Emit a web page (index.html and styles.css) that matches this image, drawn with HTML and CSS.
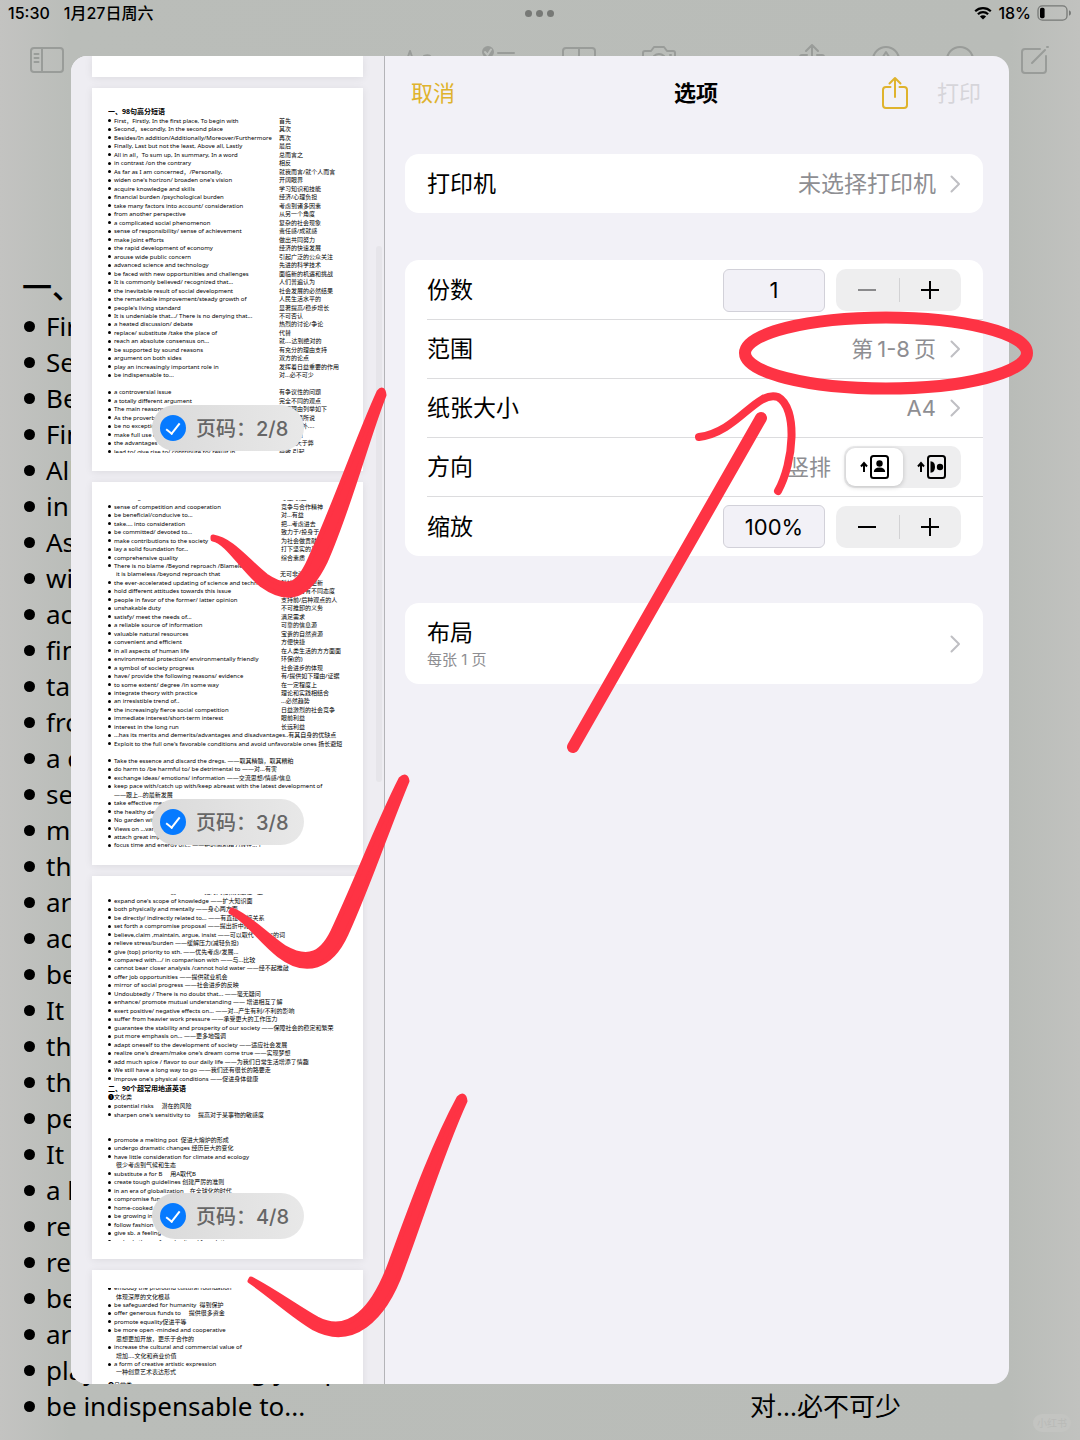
FILE: index.html
```html
<!DOCTYPE html>
<html lang="zh-CN">
<head>
    <meta charset="UTF-8">
    <meta name="viewport" content="width=device-width, initial-scale=1.0">
    <title>打印选项</title>
    <link rel="stylesheet" href="styles.css">
</head>
<body>

<!-- Status bar -->
<div class="statusbar">
    <div class="status-left"><span>15:30</span><span>1月27日周六</span></div>
    <div class="dots"><i></i><i></i><i></i></div>
    <div class="status-right">
        <svg width="18" height="14" viewBox="0 0 18 14"><path d="M1.2 5.2a11.2 11.2 0 0 1 15.6 0M3.9 8.2a7.3 7.3 0 0 1 10.2 0" fill="none" stroke="#000" stroke-width="2.2"/><path d="M9 13.6 5.9 10.5a4.4 4.4 0 0 1 6.2 0z"/></svg>
        <span>18%</span>
        <svg width="34" height="16" viewBox="0 0 34 16"><rect x="1" y=".8" width="29" height="14.4" rx="4.4" fill="none" stroke="#767876" stroke-width="1.3"/><rect x="3" y="2.8" width="4.6" height="10.4" rx="1.6"/><path d="M32 5.3v5.4q2-.6 2-2.7t-2-2.7z" fill="#767876"/></svg>
    </div>
</div>

<!-- Notes toolbar -->
<div class="toolbar">
    <svg width="34" height="28" viewBox="0 0 34 28"><rect x="1" y="2" width="32" height="24" rx="3"/><path d="M12 2v24M4.500 8h4M4.500 12h4M4.500 16h4"/></svg>
    <div class="tools-mid">
        <svg width="34" height="28" viewBox="0 0 34 28"><path d="M1 25 8 5l7 20M4 18h8M22 10q5-2 7 1v14"/></svg>
        <svg width="34" height="28" viewBox="0 0 34 28"><circle cx="6" cy="6" r="6" fill="#999c99" stroke="none"/><path d="m3 6 2.500 3L9 3.500" stroke="#bbbeba"/><path d="M16 7h16M16 21h16"/><circle cx="6" cy="21" r="5"/></svg>
        <svg width="34" height="28" viewBox="0 0 34 28"><rect x="1" y="2" width="32" height="24" rx="3"/><path d="M17 2v24M1 14h32"/></svg>
        <svg width="34" height="28" viewBox="0 0 34 28"><path d="M1 24V7q0-2 2-2h6l3-4h10l3 4h6q2 0 2 2v17z"/><circle cx="17" cy="15" r="7"/><path d="M28 9h1"/></svg>
    </div>
    <div class="tools-right">
        <svg width="34" height="28" viewBox="0 0 34 28"><path d="M12 9H7q-2 0-2 2v15h24V11q0-2-2-2h-5M17 19V-1M11 5l6-6 6 6"/></svg>
        <svg width="34" height="28" viewBox="0 0 34 28"><circle cx="17" cy="14" r="13"/><path d="m12 14 5-8 5 8-3 8h-4z"/></svg>
        <svg width="34" height="28" viewBox="0 0 34 28"><circle cx="17" cy="14" r="13"/><path d="M10 14h1M17 14h1M24 14h1"/></svg>
        <svg width="34" height="28" viewBox="0 0 34 28"><path d="M23 3H8Q5 3 5 6v18q0 3 3 3h18q3 0 3-3V10M15 17 28 4M30 1h1"/></svg>
    </div>
</div>

<!-- The note behind the sheet -->
<div class="note">
    <h1>一、98句高分短语</h1>
    <ul>
        <li>First, Firstly, In the first place, To begin with</li>
        <li>Second, secondly, In the second place</li>
        <li>Besides/In addition/Additionally</li>
        <li>Finally, Last but not the least, Above all, Lastly</li>
        <li>All in all, To sum up, In summary, In a word</li>
        <li>in contrast /on the contrary</li>
        <li>As far as I am concerned, /Personally,</li>
        <li>widen one's horizon/ broaden one's vision</li>
        <li>acquire knowledge and skills</li>
        <li>financial burden /psychological burden</li>
        <li>take many factors into account/ consideration</li>
        <li>from another perspective</li>
        <li>a complicated social phenomenon</li>
        <li>sense of responsibility/ sense of achievement</li>
        <li>make joint efforts</li>
        <li>the rapid development of economy</li>
        <li>arouse wide public concern</li>
        <li>advanced science and technology</li>
        <li>be faced with new opportunities and challenges</li>
        <li>It is commonly believed/ recognized that...</li>
        <li>the inevitable result of social development</li>
        <li>the remarkable improvement/steady growth of</li>
        <li>people's living standard</li>
        <li>It is undeniable that.../ There is no denying that...</li>
        <li>a heated discussion/ debate</li>
        <li>replace/ substitute /take the place of</li>
        <li>reach an absolute consensus on...</li>
        <li>be supported by sound reasons</li>
        <li>argument on both sides</li>
        <li>play an increasingly important role in</li>
        <li>be indispensable to...<span>对...必不可少</span></li>
    </ul>
</div>

<!-- Print sheet -->
<div class="sheet">
    <div class="preview">
        <div class="page page-end"></div>

        <div class="page">
            <div class="page-body">
                <ul class="phrases first">
                    <li class="title">一、98句高分短语</li>
                    <li>First，Firstly, In the first place, To begin with<span>首先</span></li>
                    <li>Second，secondly, In the second place<span>其次</span></li>
                    <li>Besides/In addition/Additionally/Moreover/Furthermore<span>再次</span></li>
                    <li>Finally, Last but not the least, Above all, Lastly<span>最后</span></li>
                    <li>All in all，To sum up, In summary, In a word<span>总而言之</span></li>
                    <li>in contrast /on the contrary<span>相反</span></li>
                    <li>As far as I am concerned，/Personally,<span>就我而言/就个人而言</span></li>
                    <li>widen one's horizon/ broaden one's vision<span>开阔眼界</span></li>
                    <li>acquire knowledge and skills<span>学习知识和技能</span></li>
                    <li>financial burden /psychological burden<span>经济/心理负担</span></li>
                    <li>take many factors into account/ consideration<span>考虑到诸多因素</span></li>
                    <li>from another perspective<span>从另一个角度</span></li>
                    <li>a complicated social phenomenon<span>复杂的社会现象</span></li>
                    <li>sense of responsibility/ sense of achievement<span>责任感/成就感</span></li>
                    <li>make joint efforts<span>做出共同努力</span></li>
                    <li>the rapid development of economy<span>经济的快速发展</span></li>
                    <li>arouse wide public concern<span>引起广泛的公众关注</span></li>
                    <li>advanced science and technology<span>先进的科学技术</span></li>
                    <li>be faced with new opportunities and challenges<span>面临新的机遇和挑战</span></li>
                    <li>It is commonly believed/ recognized that...<span>人们普遍认为</span></li>
                    <li>the inevitable result of social development<span>社会发展的必然结果</span></li>
                    <li>the remarkable improvement/steady growth of<span>人民生活水平的</span></li>
                    <li>people's living standard<span>显著提高/稳步增长</span></li>
                    <li>It is undeniable that.../ There is no denying that...<span>不可否认</span></li>
                    <li>a heated discussion/ debate<span>热烈的讨论/争论</span></li>
                    <li>replace/ substitute /take the place of<span>代替</span></li>
                    <li>reach an absolute consensus on...<span>就....达到绝对的</span></li>
                    <li>be supported by sound reasons<span>有充分的理由支持</span></li>
                    <li>argument on both sides<span>双方的论点</span></li>
                    <li>play an increasingly important role in<span>发挥着日益重要的作用</span></li>
                    <li>be indispensable to...<span>对...必不可少</span></li>
                    <li class="blank"></li>
                    <li>a controversial issue<span>有争议性的问题</span></li>
                    <li>a totally different argument<span>完全不同的观点</span></li>
                    <li>The main reasons are<span>主要理由列举如下</span></li>
                    <li>As the proverb goes<span>正如谚语所说</span></li>
                    <li>be no exception<span>...也不例外....</span></li>
                    <li>make full use of<span>充分利用</span></li>
                    <li>the advantages outweigh<span>...的利大于弊</span></li>
                    <li>lead to/ give rise to/ contribute to/ result in<span>导致,引起</span></li>
                </ul>
            </div>
            <label class="pagetag"><input type="checkbox" checked><span>页码：2/8</span></label>
        </div>

        <div class="page">
            <div class="page-body">
                <ul class="phrases second">
                    <li>lead to/ give rise to/ contribute to/ result in<span>导致,引起</span></li>
                    <li>sense of competition and cooperation<span>竞争与合作精神</span></li>
                    <li>be beneficial/conducive to...<span>对...有益</span></li>
                    <li>take.... into consideration<span>把...考虑进去</span></li>
                    <li>be committed/ devoted to...<span>致力于/投身于</span></li>
                    <li>make contributions to the society<span>为社会做贡献</span></li>
                    <li>lay a solid foundation for...<span>打下坚实的基础</span></li>
                    <li>comprehensive quality<span>综合素质</span></li>
                    <li>There is no blame /Beyond reproach /Blameless /</li>
                    <li class="cont">it is blameless /beyond reproach that<span>无可非议</span></li>
                    <li>the ever-accelerated updating of science and technology<span>科技的不断更新</span></li>
                    <li>hold different attitudes towards this issue<span>对此事持有不同态度</span></li>
                    <li>people in favor of the former/ latter opinion<span>支持前/后种观点的人</span></li>
                    <li>unshakable duty<span>不可推卸的义务</span></li>
                    <li>satisfy/ meet the needs of...<span>满足需求</span></li>
                    <li>a reliable source of information<span>可靠的信息源</span></li>
                    <li>valuable natural resources<span>宝贵的自然资源</span></li>
                    <li>convenient and efficient<span>方便快捷</span></li>
                    <li>in all aspects of human life<span>在人类生活的方方面面</span></li>
                    <li>environmental protection/ environmentally friendly<span>环保(的)</span></li>
                    <li>a symbol of society progress<span>社会进步的体现</span></li>
                    <li>have/ provide the following reasons/ evidence<span>有/提供如下理由/证据</span></li>
                    <li>to some extent/ degree /in some way<span>在一定程度上</span></li>
                    <li>integrate theory with practice<span>理论和实践相结合</span></li>
                    <li>an irresistible trend of..<span>...必然趋势</span></li>
                    <li>the increasingly fierce social competition<span>日益激烈的社会竞争</span></li>
                    <li>immediate interest/short-term interest<span>眼前利益</span></li>
                    <li>interest in the long run<span>长远利益</span></li>
                    <li>...has its merits and demerits/advantages and disadvantages..有其自身的优缺点</li>
                    <li>Exploit to the full one's favorable conditions and avoid unfavorable ones 扬长避短</li>
                    <li class="blank"></li>
                    <li>Take the essence and discard the dregs. ——取其精髓，取其糟粕</li>
                    <li>do harm to /be harmful to/ be detrimental to ——对...有害</li>
                    <li>exchange ideas/ emotions/ information ——交流思想/情感/信息</li>
                    <li>keep pace with/catch up with/keep abreast with the latest development of</li>
                    <li class="wrapped">——跟上...的最新发展</li>
                    <li>take effective measures</li>
                    <li>the healthy development</li>
                    <li>No garden without weeds</li>
                    <li>Views on ...vary</li>
                    <li>attach great importance</li>
                    <li>focus time and energy on... ——把时间和精力放在...上</li>
                </ul>
            </div>
            <label class="pagetag"><input type="checkbox" checked><span>页码：3/8</span></label>
        </div>

        <div class="page">
            <div class="page-body">
                <ul class="phrases third">
                    <li>focus time and energy on... ——把时间和精力放在...上</li>
                    <li>expand one's scope of knowledge ——扩大知识面</li>
                    <li>both physically and mentally ——身心两方面</li>
                    <li>be directly/ indirectly related to... ——有直接/间接关系</li>
                    <li>set forth a compromise proposal ——提出折中建议</li>
                    <li>believe,claim ,maintain, argue, insist ——可以取代"think"的词</li>
                    <li>relieve stress/burden ——缓解压力(减轻负担)</li>
                    <li>give (top) priority to sth. ——优先考虑/发展...</li>
                    <li>compared with.../ in comparison with ——与...比较</li>
                    <li>cannot bear closer analysis /cannot hold water ——经不起推敲</li>
                    <li>offer job opportunities ——提供就业机会</li>
                    <li>mirror of social progress ——社会进步的反映</li>
                    <li>Undoubtedly / There is no doubt that... ——毫无疑问</li>
                    <li>enhance/ promote mutual understanding —— 增进相互了解</li>
                    <li>exert positive/ negative effects on... ——对...产生有利/不利的影响</li>
                    <li>suffer from heavier work pressure ——承受更大的工作压力</li>
                    <li>guarantee the stability and prosperity of our society ——保障社会的稳定和繁荣</li>
                    <li>put more emphasis on... ——更多地强调</li>
                    <li>adapt oneself to the development of society ——适应社会发展</li>
                    <li>realize one's dream/make one's dream come true ——实现梦想</li>
                    <li>add much spice / flavor to our daily life ——为我们日常生活增添了情趣</li>
                    <li>We still have a long way to go ——我们还有很长的路要走</li>
                    <li>improve one's physical conditions ——促进身体健康</li>
                    <li class="title">二、90个超常用地道英语</li>
                    <li class="plain">❶文化类</li>
                    <li>potential risks &nbsp; &nbsp; 潜在的风险</li>
                    <li>sharpen one's sensitivity to &nbsp; &nbsp; 提高对于某事物的敏感度</li>
                    <li class="blank"></li>
                    <li class="blank"></li>
                    <li>promote a melting pot &nbsp;促进大熔炉的形成</li>
                    <li>undergo dramatic changes 经历巨大的变化</li>
                    <li>have little consideration for climate and ecology</li>
                    <li class="cont">很少考虑到气候和生态</li>
                    <li>substitute a for B &nbsp; &nbsp; 用A取代B</li>
                    <li>create tough guidelines 创建严厉的准则</li>
                    <li>in an era of globalization &nbsp; &nbsp;在全球化的时代</li>
                    <li>compromise fundamentals</li>
                    <li>home-cooked meal</li>
                    <li>be growing in number</li>
                    <li>follow fashion blindly</li>
                    <li>give sb. a feeling of</li>
                    <li>embody the profound cultural foundation</li>
                </ul>
            </div>
            <label class="pagetag"><input type="checkbox" checked><span>页码：4/8</span></label>
        </div>

        <div class="page">
            <div class="page-body">
                <ul class="phrases fourth">
                    <li>embody the profound cultural foundation</li>
                    <li class="cont">体现深厚的文化根基</li>
                    <li>be safeguarded for humanity &nbsp;得到保护</li>
                    <li>offer generous funds to &nbsp; &nbsp; 提供很多资金</li>
                    <li>promote equality促进平等</li>
                    <li>be more open -minded and cooperative</li>
                    <li class="cont">思想更加开放，更乐于合作的</li>
                    <li>increase the cultural and commercial value of</li>
                    <li class="cont">增加....文化和商业价值</li>
                    <li>a form of creative artistic expression</li>
                    <li class="cont">一种创意艺术表达形式</li>
                    <li class="plain last">❷日常类</li>
                </ul>
            </div>
        </div>
        <div class="scroller"></div>
    </div>

    <div class="options">
        <div class="options-head">
            <button class="cancel">取消</button>
            <h2>选项</h2>
            <div class="head-actions">
                <button class="share" aria-label="分享"><svg width="28" height="34" viewBox="0 0 28 34"><path d="M9.500 11H5q-3 0-3 3v15q0 3 3 3h18q3 0 3-3V14q0-3-3-3h-4.500M14 21V2M8.500 7.500 14 2l5.500 5.500"/></svg></button>
                <button class="print" disabled>打印</button>
            </div>
        </div>

        <div class="card">
            <div class="row"><span>打印机</span><a href="#" class="value"><span>未选择打印机</span><svg width="11" height="18" viewBox="0 0 11 18"><path d="m1.500 1.500 7.500 7.500-7.500 7.500"/></svg></a></div>
        </div>

        <div class="card settings">
            <div class="row">
                <label for="copies">份数</label>
                <div class="controls">
                    <input class="field" id="copies" type="text" value="1">
                    <div class="stepper"><button class="off" aria-label="减少份数"><svg width="20" height="20" viewBox="0 0 20 20"><path d="M1 10h18"/></svg></button><button aria-label="增加份数"><svg width="20" height="20" viewBox="0 0 20 20"><path d="M1 10h18M10 1v18"/></svg></button></div>
                </div>
            </div>
            <div class="row"><span>范围</span><a href="#" class="value"><span class="range"><span>第</span><span>1-8</span><span>页</span></span><svg width="11" height="18" viewBox="0 0 11 18"><path d="m1.500 1.500 7.500 7.500-7.500 7.500"/></svg></a></div>
            <div class="row"><span>纸张大小</span><a href="#" class="value"><span class="latin">A4</span><svg width="11" height="18" viewBox="0 0 11 18"><path d="m1.500 1.500 7.500 7.500-7.500 7.500"/></svg></a></div>
            <div class="row">
                <span>方向</span>
                <div class="controls">
                    <span class="orient">竖排</span>
                    <div class="segment">
                        <button class="on" aria-label="竖排"><svg width="30" height="26" viewBox="0 0 30 26"><path d="M5 18v-8M2 12.500 5 9l3 3.500" class="line"/><rect x="12" y="2" width="17" height="22" rx="2.500" class="line"/><circle cx="20.500" cy="9.500" r="3.200"/><path d="M14.800 18q.2-4.500 5.700-4.500t5.700 4.500z"/></svg></button>
                        <button aria-label="横排"><svg width="30" height="26" viewBox="0 0 30 26"><path d="M5 18v-8M2 12.500 5 9l3 3.500" class="line"/><rect x="12" y="2" width="17" height="22" rx="2.500" class="line"/><circle cx="24" cy="13" r="3.200"/><path d="M14.500 7.300q4.500.2 4.500 5.700t-4.500 5.700z"/></svg></button>
                    </div>
                </div>
            </div>
            <div class="row">
                <label for="scale">缩放</label>
                <div class="controls">
                    <input class="field" id="scale" type="text" value="100%">
                    <div class="stepper"><button aria-label="缩小"><svg width="20" height="20" viewBox="0 0 20 20"><path d="M1 10h18"/></svg></button><button aria-label="放大"><svg width="20" height="20" viewBox="0 0 20 20"><path d="M1 10h18M10 1v18"/></svg></button></div>
                </div>
            </div>
        </div>

        <div class="card">
            <div class="row tall"><div>布局<small>每张 1 页</small></div><a href="#" class="value" aria-label="布局"><svg width="11" height="18" viewBox="0 0 11 18"><path d="m1.500 1.500 7.500 7.500-7.500 7.500"/></svg></a></div>
        </div>
    </div>
</div>

<div class="watermark">小红书</div>

<!-- Red pen marks -->
<svg class="marks" viewBox="0 0 1080 1440">
    <ellipse cx="886" cy="353" rx="141" ry="35.500" stroke-width="12"/>
    <path d="M573 747 761 418" stroke-width="12"/>
    <path d="M699 437C738 432 756 390 778 397C798 408 794 462 778 491" stroke-width="8"/>
    <path d="M384 395C366 441 349 508 325 562C309 595 290 605 262 585C242 569 228 542 213 539L213 537C232 540 248 562 266 576C290 592 300 584 312 555C336 502 358 438 379 392Q383 387 384 395z" class="nib"/>
    <path d="M407 781C387 829 368 886 346 934C331 967 306 976 279 955C261 941 246 919 231 912L232 910C248 916 266 935 285 948C308 961 323 955 335 927C358 878 378 824 401 779Q406 774 407 781z" class="nib"/>
    <path d="M465 1101C442 1151 422 1216 402 1269C384 1320 352 1348 314 1328C292 1315 272 1296 250 1281L251 1279C274 1291 296 1307 317 1319C349 1336 374 1309 391 1262C411 1208 433 1146 459 1098Q464 1093 465 1101z" class="nib"/>
</svg>

</body>
</html>
```
FILE: styles.css
```css
* {
    box-sizing: border-box;
}

body, h1, h2, ul {
    margin: 0;
    padding: 0;
}

body {
    position: relative;
    min-height: 100vh;
    overflow: hidden;
    background: linear-gradient(90deg, #c3c3c1 0, #babdb9 70px, #b9bcb8 1010px, #c1c2bf 100%);
    font-family: Inter, "Noto Sans CJK SC", sans-serif;
    color: #000;
}

button {
    border: 0;
    padding: 0;
    background: none;
    font: inherit;
    color: inherit;
}

ul {
    list-style: none;
}

a {
    color: inherit;
    text-decoration: none;
}

svg {
    display: block;
}

/* Status bar */
.statusbar {
    display: grid;
    grid-template-columns: 1fr auto 1fr;
    align-items: center;
    height: 26px;
    padding: 0 9px 0 8px;
    font-size: 16px;
    font-weight: 500;
    line-height: 20px;
}

.status-left, .status-right {
    display: flex;
    align-items: center;
    gap: 14px;
}

.status-right {
    justify-content: flex-end;
    gap: 6px;
}

.dots {
    display: flex;
    gap: 4px;
}

.dots i {
    width: 7px;
    height: 7px;
    border-radius: 50%;
    background: #777976;
}

/* Notes toolbar */
.toolbar {
    display: flex;
    align-items: center;
    padding: 20px 29px 0 30px;
}

.toolbar svg {
    overflow: visible;
    fill: none;
    stroke: #999c99;
    stroke-width: 2;
    stroke-linecap: round;
    stroke-linejoin: round;
}

.tools-mid, .tools-right {
    display: flex;
    gap: 46px;
    margin-left: auto;
}

.tools-right {
    gap: 40px;
    margin-left: 119px;
}

/* Note */
.note {
    padding: 192px 0 0 22px;
    font-family: "Noto Sans", "Noto Sans CJK SC", sans-serif;
    font-size: 26px;
    line-height: 36px;
    white-space: nowrap;
}

.note h1 {
    font-size: 30px;
    font-weight: 500;
    line-height: 42px;
}

.note li {
    display: grid;
    grid-template-columns: 24px 704px 1fr;
    align-items: center;
}

.note li::before {
    content: "";
    width: 11px;
    height: 11px;
    margin-left: 2px;
    border-radius: 50%;
    background: #000;
}

/* Sheet */
.sheet {
    position: absolute;
    top: 56px;
    left: 71px;
    right: 71px;
    bottom: 56px;
    display: flex;
    overflow: hidden;
    border-radius: 16px;
    background: #f2f1f7;
}

.preview {
    position: relative;
    display: flex;
    flex-direction: column;
    gap: 11px;
    width: 314px;
    padding: 0 21px;
    overflow: hidden;
    border-right: 1px solid #b4b4b8;
    background: #eeedf2;
}

.page {
    position: relative;
    flex: none;
    padding: 18px 0 18px 16px;
    background: #fff;
    box-shadow: 0 1px 8px rgba(0, 0, 0, 0.08);
}

.page-end {
    height: 21px;
    padding: 0;
}

.page-body {
    height: 347px;
    overflow: hidden;
}

.scroller {
    position: absolute;
    top: 190px;
    right: 2px;
    width: 6px;
    height: 536px;
    border-radius: 3px;
    background: #e6e5ea;
}

.phrases {
    display: flex;
    flex-direction: column;
    font-family: "Noto Sans", "Noto Sans CJK SC", sans-serif;
    font-size: 6px;
    line-height: 8px;
    white-space: nowrap;
}

.phrases li {
    display: grid;
    grid-template-columns: 6px 165px 1fr;
    align-items: center;
    flex: 1 1 0;
    min-height: 0;
}

.phrases li::before {
    content: "";
    width: 3px;
    height: 3px;
    border-radius: 50%;
    background: #000;
}

.phrases .title {
    display: block;
    flex-grow: 1.25;
    font-size: 7px;
    font-weight: bold;
    line-height: 11px;
}

.phrases .plain {
    display: block;
}

.phrases .title::before, .phrases .plain::before {
    content: none;
}

.phrases .cont::before, .phrases .wrapped::before, .phrases .blank::before {
    background: none;
}

.phrases .cont {
    grid-template-columns: 8px 164px 1fr;
}

.first {
    height: 350px;
}

.second {
    height: 356px;
    margin-top: -6px;
}

.second li {
    grid-template-columns: 6px 167px 1fr;
}

.third {
    height: 358px;
    margin-top: -6px;
}

.fourth {
    height: 101px;
    margin-top: -4px;
}

.fourth .last {
    line-height: 16px;
}

.pagetag {
    position: absolute;
    left: 60px;
    bottom: 20px;
    display: flex;
    align-items: center;
    gap: 10px;
    height: 46px;
    width: 152px;
    padding-left: 8px;
    border-radius: 23px;
    background: linear-gradient(90deg, #dadada, #e8e8e8);
    color: #666;
    font-size: 20px;
    font-weight: 500;
    white-space: nowrap;
}

.pagetag span {
    padding-bottom: 2px;
}

.pagetag input {
    appearance: none;
    display: grid;
    place-items: center;
    flex: none;
    width: 26px;
    height: 26px;
    margin: 0;
    border-radius: 50%;
    background: #067aff;
}

.pagetag input::after {
    content: "";
    width: 6px;
    height: 12px;
    margin-bottom: 3px;
    border: solid #fff;
    border-width: 0 2px 2px 0;
    transform: rotate(38deg);
}

/* Options */
.options {
    flex: 1;
    min-width: 0;
    padding: 0 26px 0 20px;
    font-size: 23px;
}

.options-head {
    display: grid;
    grid-template-columns: 1fr auto 1fr;
    align-items: center;
    height: 74px;
    margin-bottom: 24px;
    padding: 0 2px 0 6px;
    font-size: 22px;
}

.options-head h2, .cancel, .print {
    padding-bottom: 4px;
}

.options-head h2 {
    font-size: 22px;
    font-weight: 600;
}

.cancel {
    justify-self: start;
    color: #dfb32d;
}

.head-actions {
    display: flex;
    align-items: center;
    justify-content: flex-end;
    gap: 28px;
}

.share svg {
    fill: none;
    stroke: #dfb32d;
    stroke-width: 2;
    stroke-linecap: round;
    stroke-linejoin: round;
}

.print {
    color: #d6d5da;
}

.card {
    margin-bottom: 47px;
    padding-left: 22px;
    border-radius: 14px;
    background: #fff;
}

.settings {
    padding-top: 1px;
}

.row {
    display: flex;
    align-items: center;
    justify-content: space-between;
    min-height: 59px;
    padding-right: 22px;
    border-bottom: 1px solid #dcdcde;
}

.row:last-child {
    border-bottom: 0;
}

.row > span, .row > label, .value > span, .orient {
    padding-bottom: 4px;
}

.tall {
    min-height: 81px;
    line-height: 32px;
}

.tall small {
    display: block;
    color: #8e8e92;
    font-size: 15px;
    line-height: 22px;
}

.value {
    display: flex;
    align-items: center;
    gap: 14px;
    color: #8e8e92;
}

.value .latin {
    padding-bottom: 0;
    font-size: 22px;
}

.range {
    display: flex;
    align-items: baseline;
    gap: 4px;
    font-size: 22px;
}

.value svg {
    fill: none;
    stroke: #bfbfc3;
    stroke-width: 2;
    stroke-linecap: round;
    stroke-linejoin: round;
}

.controls {
    display: flex;
    align-items: center;
    gap: 11px;
}

.orient {
    margin-right: 2px;
    color: #8e8e92;
    font-size: 22px;
}

.field {
    width: 102px;
    height: 43px;
    border: 1px solid #d2d1d9;
    border-radius: 6px;
    background: #f2f1f7;
    font: inherit;
    font-size: 22px;
    text-align: center;
}

.stepper, .segment {
    display: flex;
    width: 125px;
    height: 42px;
    border-radius: 10px;
    background: #eeeeef;
}

.stepper button {
    position: relative;
    display: grid;
    place-items: center;
    flex: 1;
}

.stepper button + button::before {
    content: "";
    position: absolute;
    left: 0;
    top: 9px;
    bottom: 9px;
    border-left: 1px solid #d2d2d4;
}

.stepper svg {
    stroke: #000;
    stroke-width: 2;
}

.stepper .off svg {
    stroke: #8a8a8c;
}

.segment {
    width: 117px;
    padding: 2px;
}

.segment button {
    display: grid;
    place-items: center;
    flex: 1;
    border-radius: 9px;
}

.segment .on {
    background: #fff;
    box-shadow: 0 1px 5px rgba(0, 0, 0, 0.2);
}

.segment .line {
    fill: none;
    stroke: #000;
    stroke-width: 2;
}

.watermark {
    position: absolute;
    right: 9px;
    bottom: 8px;
    padding: 0 4px;
    border-radius: 9px;
    background: #c3c4c1;
    color: #b9bab7;
    font-size: 10px;
    line-height: 18px;
}

.marks {
    position: absolute;
    top: 0;
    left: 0;
    width: 100%;
    pointer-events: none;
    fill: none;
    stroke: #fe3344;
    stroke-linecap: round;
    stroke-linejoin: round;
}

.marks .nib {
    fill: #fe3344;
    stroke-width: 5;
}
```
